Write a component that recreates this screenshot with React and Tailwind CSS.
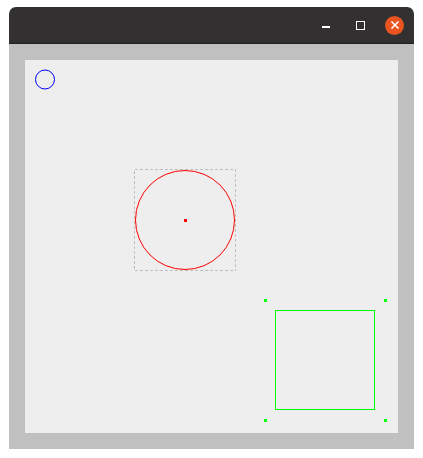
import React from 'react';

// shapes on the canvas, coordinates relative to the canvas
const handles = [
  [240, 240],
  [360, 240],
  [240, 360],
  [360, 360],
];

export default function App() {
  return (
    <div className="w-[423px] h-[458px] bg-white pt-[7px] pl-[9px]">
      <div className="w-[405px] flex flex-col rounded-t-[7px] overflow-hidden">
        <div className="h-[37px] bg-[#323031] border-b border-[#1e1e1e] flex items-center justify-end pr-[10px]">
          <div className="w-[8px] h-[1.5px] bg-white mr-[26px] mt-[4px]" />
          <div className="w-[9px] h-[9px] border-[1.5px] border-white mr-[20px]" />
          <div className="w-[19px] h-[19px] rounded-full bg-[#e95420] flex items-center justify-center">
            <svg width="10" height="10" viewBox="0 0 10 10">
              <path d="M1.5 1.5L8.5 8.5M8.5 1.5L1.5 8.5" stroke="white" strokeWidth="1.6" />
            </svg>
          </div>
        </div>
        <div className="bg-[#c0c0c0] p-[16px]">
          <svg width="373" height="373" className="block bg-[#eeeeee]" shapeRendering="crispEdges">
            <circle cx="20" cy="19.5" r="9.5" fill="none" stroke="#0000ff" strokeWidth="1" shapeRendering="auto" />
            <rect x="109.5" y="109.5" width="101" height="101" fill="none" stroke="#c0c0c0" strokeDasharray="3 2" />
            <circle cx="160" cy="160" r="49.5" fill="none" stroke="#ff0000" strokeWidth="1" shapeRendering="auto" />
            <rect x="159" y="159" width="3" height="3" fill="#ff0000" />
            <rect x="250.5" y="250.5" width="99" height="99" fill="none" stroke="#00ff00" />
            {handles.map(([x, y]) => (
              <rect key={`${x}-${y}`} x={x - 1} y={y - 1} width="3" height="3" fill="#00ff00" />
            ))}
          </svg>
        </div>
      </div>
    </div>
  );
}
